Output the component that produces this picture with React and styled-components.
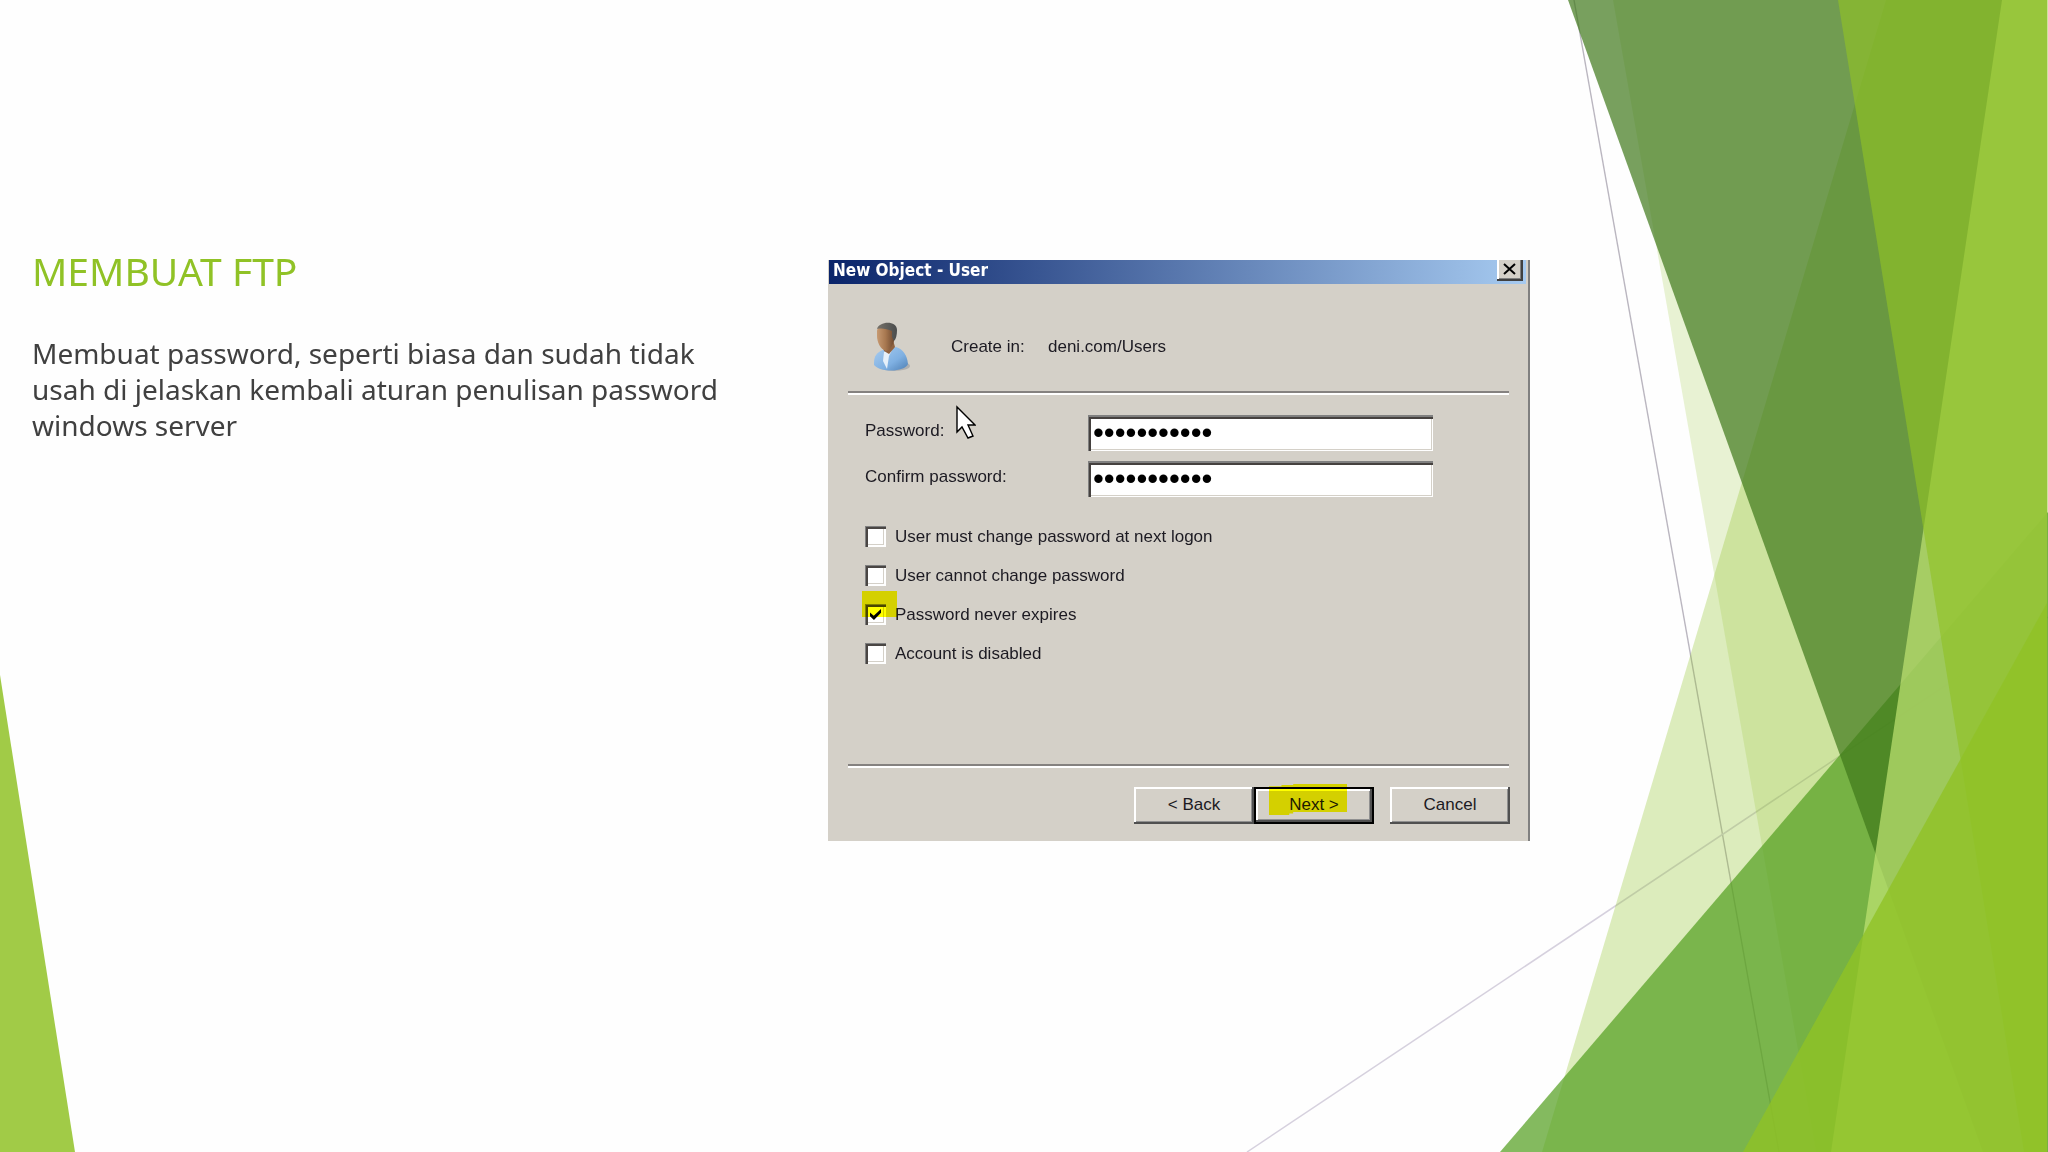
import React from "react";
import styled, { createGlobalStyle, css } from "styled-components";

const GlobalStyle = createGlobalStyle`
  *, *::before, *::after { box-sizing: border-box; }
  body { margin: 0; background: #fefefe; }
`;

const face = "#d4d0c8";

const Slide = styled.main`
  position: relative;
  display: flex;
  align-items: flex-start;
  gap: 70px;
  min-height: 100vh;
  padding: 238px 32px 40px;
  overflow: hidden;
  font-family: "Noto Sans", "Open Sans", sans-serif;
`;

const Backdrop = styled.svg`
  position: absolute;
  inset: 0;
  width: 100%;
  height: 100%;
`;

const Copy = styled.section`
  position: relative;
  flex: 0 1 726px;
`;

const Heading = styled.h1`
  margin: 0 0 31px;
  color: #90c226;
  font-size: 39px;
  font-weight: 400;
  line-height: 66px;
`;

const Paragraph = styled.p`
  margin: 0;
  color: #404040;
  font-size: 28px;
  line-height: 36px;
`;

const Dialog = styled.form`
  position: relative;
  flex: 0 0 auto;
  width: 702px;
  margin-top: 22px;
  border-right: 2px solid #808080;
  background: ${face};
  color: #1c1a22;
  font: 17px "Liberation Sans", Arial, sans-serif;
`;

const TitleBar = styled.header`
  display: flex;
  align-items: flex-start;
  justify-content: space-between;
  height: 24px;
  margin: 0 2px 0 1px;
  padding: 0 3px 0 4px;
  background: linear-gradient(90deg, #0a246a, #a6caf0);
`;

const Title = styled.h2`
  margin: 0;
  color: #fff;
  font: 700 17px/20px "DejaVu Sans Condensed", "DejaVu Sans", sans-serif;
`;

const bevel = css`
  box-shadow: inset -2px -2px #505050, inset 2px 2px #fff, inset -3px -3px #909090;
`;

const CloseButton = styled.button`
  display: grid;
  place-items: center;
  width: 26px;
  height: 21px;
  padding: 0 2px 3px 0;
  border: 0;
  background: ${face};
  box-shadow: inset -2px -2px #404040, inset 2px 0 #fff, inset -3px -3px #808080;
`;

const Owner = styled.div`
  display: flex;
  align-items: center;
  padding: 37px 46px 19px;
`;

const OwnerLabel = styled.span`
  width: 97px;
  margin-left: 41px;
`;

const Rule = styled.hr`
  height: 4px;
  margin: 0 19px 0 20px;
  border: 0;
  border-top: 2px solid #858280;
  border-bottom: 2px solid #fff;
`;

const Fields = styled.div`
  display: grid;
  grid-template-columns: 223px 345px;
  align-items: center;
  row-gap: 10px;
  padding: 20px 37px 29px;
`;

const FieldLabel = styled.label`
  padding-bottom: 4px;
`;

const PasswordBox = styled.input`
  width: 100%;
  height: 36px;
  padding: 0 0 1px 5px;
  border: 0;
  outline: 0;
  background: #fff;
  box-shadow: inset 1px 2px #808080, inset 3px 4px #45413f, inset -1px -1px #fff, inset -2px -2px ${face};
  color: #000;
  font: 31px "Liberation Sans", Arial, sans-serif;
`;

const Options = styled.div`
  display: grid;
  row-gap: 18px;
  padding: 0 37px 100px;
`;

const Option = styled.label`
  position: relative;
  display: flex;
  align-items: center;
  gap: 9px;
  height: 21px;
`;

const CheckBox = styled.input`
  appearance: none;
  display: grid;
  place-items: center;
  width: 21px;
  height: 21px;
  margin: 0;
  background: #fff;
  box-shadow: inset 1px 1px #808080, inset 3px 3px #4a4644, inset -2px -2px #fff, inset -3px -3px ${face};

  &:checked::before {
    content: "";
    width: 11px;
    height: 11px;
    background: #000;
    clip-path: polygon(0 32%, 34% 62%, 100% 0, 100% 34%, 36% 100%, 0 66%);
  }
`;

const Marker = styled.span`
  position: absolute;
  background: #ff0;
  mix-blend-mode: multiply;
  pointer-events: none;
`;

const OptionMarker = styled(Marker)`
  top: -13px;
  left: -3px;
  width: 35px;
  height: 26px;
`;

const NextMarker = styled(Marker)`
  top: -5px;
  left: 13px;
  width: 78px;
  height: 31px;
  clip-path: polygon(0 7%, 16% 7%, 16% 3%, 31% 3%, 31% 0, 100% 0, 100% 90%, 31% 90%, 31% 95%, 26% 95%, 26% 100%, 0 100%);
`;

const Actions = styled.footer`
  display: flex;
  justify-content: flex-end;
  padding: 19px 18px 17px;
`;

const ActionButton = styled.button`
  position: relative;
  width: 120px;
  height: 37px;
  margin-left: ${(p) => (p.$apart ? "16px" : "0")};
  padding: 0 0 1px;
  border: ${(p) => (p.$primary ? "2px solid #000" : "0")};
  background: ${face};
  color: inherit;
  font: inherit;
  ${bevel}
`;

const Pointer = styled.svg`
  position: absolute;
  top: 145px;
  left: 128px;
  width: 20px;
  height: 34px;
`;

const SlideBackdrop = () => (
  <Backdrop viewBox="0 0 2048 1152" preserveAspectRatio="none" aria-hidden="true">
    <path d="M1574 0 1779 1152" stroke="#bab6c0" strokeWidth="1.4" />
    <path d="M1247 1152 2048 617" stroke="#d6d1de" strokeWidth="1.5" />
    <path d="M1886 0H2048V1152H1542Z" fill="#90c226" fillOpacity=".3" />
    <path d="M1613 0H2048V1152H1816Z" fill="#90c226" fillOpacity=".2" />
    <path d="M1500 1152 2048 512V1152Z" fill="#54a021" fillOpacity=".72" />
    <path d="M1568 0H2047V1152H1983Z" fill="#3f7819" fillOpacity=".7" />
    <path d="M2002 0H2047V1152H1831Z" fill="#c0e474" fillOpacity=".7" />
    <path d="M1838 0H2047V1152H2024Z" fill="#90c226" fillOpacity=".65" />
    <path d="M1743 1152 2047 603V1152Z" fill="#90c226" fillOpacity=".8" />
    <path d="M0 675 75 1152H0Z" fill="#a1cb47" />
  </Backdrop>
);

const UserIcon = () => (
  <svg width="36" height="51" viewBox="0 0 36 51" aria-hidden="true">
    <defs>
      <linearGradient id="skin" x1="0" x2="1">
        <stop offset="0" stopColor="#c79a72" />
        <stop offset=".5" stopColor="#a87850" />
        <stop offset="1" stopColor="#704a30" />
      </linearGradient>
      <linearGradient id="shirt" x1="0" x2="1" y2="1">
        <stop offset="0" stopColor="#a9cdf0" />
        <stop offset=".6" stopColor="#7fb0e2" />
        <stop offset="1" stopColor="#4e7fb4" />
      </linearGradient>
      <linearGradient id="hair" x1="0" x2="1">
        <stop offset="0" stopColor="#77736b" />
        <stop offset="1" stopColor="#4a4c4c" />
      </linearGradient>
    </defs>
    <ellipse cx="20" cy="45" rx="16" ry="5" fill="#8b8f98" opacity=".5" />
    <path d="M0 42C0 35 3 31 9 29L22 26C29 28 33 34 34 43C31 51 7 52 0 44Z" fill="url(#shirt)" />
    <path d="M10 31 19 27 15 35 13 48 9 40Z" fill="#e6f0fa" />
    <path d="M9 26 19 19 21 26 15 33 10 30Z" fill="#8f6240" />
    <path d="M3 10C3 4 19 3 20 10V20C18 26 15 30 12 30C6 28 3 21 3 15Z" fill="url(#skin)" />
    <path d="M3 8C5 0 23 -1 23 9C23 14 22 18 20 20L18 16 18 10C13 8 8 7 3 8Z" fill="url(#hair)" />
  </svg>
);

const options = [
  { id: "must-change", text: "User must change password at next logon" },
  { id: "cannot-change", text: "User cannot change password" },
  { id: "never-expires", text: "Password never expires", checked: true },
  { id: "disabled", text: "Account is disabled" },
];

export default function App() {
  return (
    <Slide>
      <GlobalStyle />
      <SlideBackdrop />
      <Copy>
        <Heading>MEMBUAT FTP</Heading>
        <Paragraph>
          Membuat password, seperti biasa dan sudah tidak usah di jelaskan kembali aturan
          penulisan password windows server
        </Paragraph>
      </Copy>
      <Dialog onSubmit={(e) => e.preventDefault()}>
        <TitleBar>
          <Title>New Object - User</Title>
          <CloseButton type="button" aria-label="Close">
            <svg width="13" height="12" viewBox="0 0 13 12" aria-hidden="true">
              <path d="M1 1 12 11M12 1 1 11" stroke="#000" strokeWidth="2" />
            </svg>
          </CloseButton>
        </TitleBar>
        <Owner>
          <UserIcon />
          <OwnerLabel>Create in:</OwnerLabel>
          <span>deni.com/Users</span>
        </Owner>
        <Rule />
        <Fields>
          <FieldLabel htmlFor="password">Password:</FieldLabel>
          <PasswordBox id="password" type="password" autoComplete="off" defaultValue="abcdefghijk" />
          <FieldLabel htmlFor="confirm">Confirm password:</FieldLabel>
          <PasswordBox id="confirm" type="password" autoComplete="off" defaultValue="abcdefghijk" />
        </Fields>
        <Options>
          {options.map((o) => (
            <Option key={o.id} htmlFor={o.id}>
              <CheckBox id={o.id} type="checkbox" defaultChecked={o.checked} />
              {o.text}
              {o.checked && <OptionMarker />}
            </Option>
          ))}
        </Options>
        <Rule />
        <Actions>
          <ActionButton type="button">&lt; Back</ActionButton>
          <ActionButton type="submit" $primary>
            Next &gt;
            <NextMarker />
          </ActionButton>
          <ActionButton type="button" $apart>Cancel</ActionButton>
        </Actions>
        <Pointer viewBox="0 0 20 34" aria-hidden="true">
          <path d="M1 2V27L6 22 12 33 17 31 12 20H19Z" fill="#fff" stroke="#000" strokeWidth="1.4" />
        </Pointer>
      </Dialog>
    </Slide>
  );
}
